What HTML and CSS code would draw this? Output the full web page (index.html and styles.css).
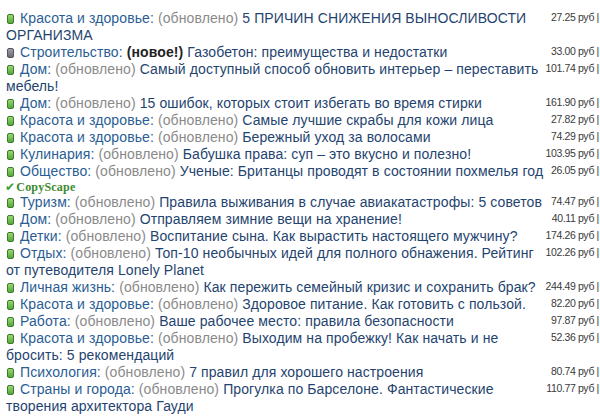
FILE: index.html
```html
<!DOCTYPE html>
<html lang="ru">
<head>
<meta charset="utf-8">
<title>Статьи</title>
<link rel="stylesheet" href="styles.css">
</head>
<body>
<table class="list">
<colgroup><col class="c-item"><col class="c-price"></colgroup>
<tr><td class="item"><span class="dot"></span><span class="cat">Красота и здоровье:</span> <span class="st">(обновлено)</span> <a class="ttl">5 ПРИЧИН СНИЖЕНИЯ ВЫНОСЛИВОСТИ ОРГАНИЗМА</a></td><td class="price">27.25 руб |</td></tr>
<tr><td class="item"><span class="dot grey"></span><span class="cat">Строительство:</span> <b class="new">(новое!)</b> <a class="ttl">Газобетон: преимущества и недостатки</a></td><td class="price">33.00 руб |</td></tr>
<tr><td class="item"><span class="dot"></span><span class="cat">Дом:</span> <span class="st">(обновлено)</span> <a class="ttl">Самый доступный способ обновить интерьер – переставить мебель!</a></td><td class="price">101.74 руб |</td></tr>
<tr><td class="item"><span class="dot"></span><span class="cat">Дом:</span> <span class="st">(обновлено)</span> <a class="ttl">15 ошибок, которых стоит избегать во время стирки</a></td><td class="price">161.90 руб |</td></tr>
<tr><td class="item"><span class="dot"></span><span class="cat">Красота и здоровье:</span> <span class="st">(обновлено)</span> <a class="ttl">Самые лучшие скрабы для кожи лица</a></td><td class="price">27.82 руб |</td></tr>
<tr><td class="item"><span class="dot"></span><span class="cat">Красота и здоровье:</span> <span class="st">(обновлено)</span> <a class="ttl">Бережный уход за волосами</a></td><td class="price">74.29 руб |</td></tr>
<tr><td class="item"><span class="dot"></span><span class="cat">Кулинария:</span> <span class="st">(обновлено)</span> <a class="ttl">Бабушка права: суп – это вкусно и полезно!</a></td><td class="price">103.95 руб |</td></tr>
<tr><td class="item"><span class="dot"></span><span class="cat">Общество:</span> <span class="st">(обновлено)</span> <a class="ttl">Ученые: Британцы проводят в состоянии похмелья год</a><div class="cs"><span class="check">✔</span>CopyScape</div></td><td class="price">26.05 руб |</td></tr>
<tr><td class="item"><span class="dot"></span><span class="cat">Туризм:</span> <span class="st">(обновлено)</span> <a class="ttl">Правила выживания в случае авиакатастрофы: 5 советов</a></td><td class="price">74.47 руб |</td></tr>
<tr><td class="item"><span class="dot"></span><span class="cat">Дом:</span> <span class="st">(обновлено)</span> <a class="ttl">Отправляем зимние вещи на хранение!</a></td><td class="price">40.11 руб |</td></tr>
<tr><td class="item"><span class="dot"></span><span class="cat">Детки:</span> <span class="st">(обновлено)</span> <a class="ttl">Воспитание сына. Как вырастить настоящего мужчину?</a></td><td class="price">174.26 руб |</td></tr>
<tr><td class="item"><span class="dot"></span><span class="cat">Отдых:</span> <span class="st">(обновлено)</span> <a class="ttl">Топ-10 необычных идей для полного обнажения. Рейтинг от путеводителя Lonely Planet</a></td><td class="price">102.26 руб |</td></tr>
<tr><td class="item"><span class="dot"></span><span class="cat">Личная жизнь:</span> <span class="st">(обновлено)</span> <a class="ttl">Как пережить семейный кризис и сохранить брак?</a></td><td class="price">244.49 руб |</td></tr>
<tr><td class="item"><span class="dot"></span><span class="cat">Красота и здоровье:</span> <span class="st">(обновлено)</span> <a class="ttl">Здоровое питание. Как готовить с пользой.</a></td><td class="price">82.20 руб |</td></tr>
<tr><td class="item"><span class="dot"></span><span class="cat">Работа:</span> <span class="st">(обновлено)</span> <a class="ttl">Ваше рабочее место: правила безопасности</a></td><td class="price">97.87 руб |</td></tr>
<tr><td class="item"><span class="dot"></span><span class="cat">Красота и здоровье:</span> <span class="st">(обновлено)</span> <a class="ttl">Выходим на пробежку! Как начать и не бросить: 5 рекомендаций</a></td><td class="price">52.36 руб |</td></tr>
<tr><td class="item"><span class="dot"></span><span class="cat">Психология:</span> <span class="st">(обновлено)</span> <a class="ttl">7 правил для хорошего настроения</a></td><td class="price">80.74 руб |</td></tr>
<tr><td class="item"><span class="dot"></span><span class="cat">Страны и города:</span> <span class="st">(обновлено)</span> <a class="ttl">Прогулка по Барселоне. Фантастические творения архитектора Гауди</a></td><td class="price">110.77 руб |</td></tr>
<tr><td class="item"><span class="dot"></span><span class="cat">Красота и здоровье:</span> <span class="st">(обновлено)</span> <a class="ttl">Секреты ухода за кожей рук</a></td><td class="price">101.45 руб |</td></tr>
</table>
</body>
</html>
```

FILE: styles.css
```css
html, body {
  margin: 0;
  padding: 0;
  overflow: hidden;
  background: #ffffff;
}
body {
  padding: 10px 0 0 6px;
  width: 620px;
  font-family: "Liberation Sans", Arial, sans-serif;
}
.list {
  border-collapse: collapse;
  table-layout: fixed;
  width: 596px;
}
.c-item {
  width: 538px;
}
.c-price {
  width: 58px;
}
.list td {
  padding: 0;
}
.item {
  font-size: 14px;
  line-height: 17px;
  letter-spacing: 0.1px;
  color: #234a78;
  vertical-align: top;
}
.dot {
  display: inline-block;
  width: 5px;
  height: 8px;
  border: 1px solid #3d7a2a;
  border-radius: 2px;
  background: linear-gradient(#9ad872, #52a83a);
  margin-right: 6px;
  vertical-align: -1px;
  margin-left: 1px;
}
.dot.grey {
  border-color: #55555e;
  background: linear-gradient(#a0a0a8, #6b6b74);
}
.cat {
  color: #2a5d94;
}
.st {
  color: #8a8a8a;
}
.new {
  color: #222222;
}
.ttl {
  color: #1f446f;
  text-decoration: none;
}
.cs {
  font-family: "Liberation Serif", "Times New Roman", serif;
  font-weight: bold;
  font-size: 12px;
  line-height: 14px;
  letter-spacing: 0.2px;
  color: #3d8a2f;
  margin-left: -1px;
}
.check {
  font-family: "DejaVu Sans", sans-serif;
  font-size: 12px;
  color: #3aa03a;
  margin-right: 1px;
}
.list .price {
  font-size: 10.5px;
  line-height: 13px;
  color: #3a3a3a;
  text-align: right;
  vertical-align: top;
  white-space: nowrap;
  overflow: visible;
  padding: 1px 3px 0 0;
  letter-spacing: -0.35px;
}
```
